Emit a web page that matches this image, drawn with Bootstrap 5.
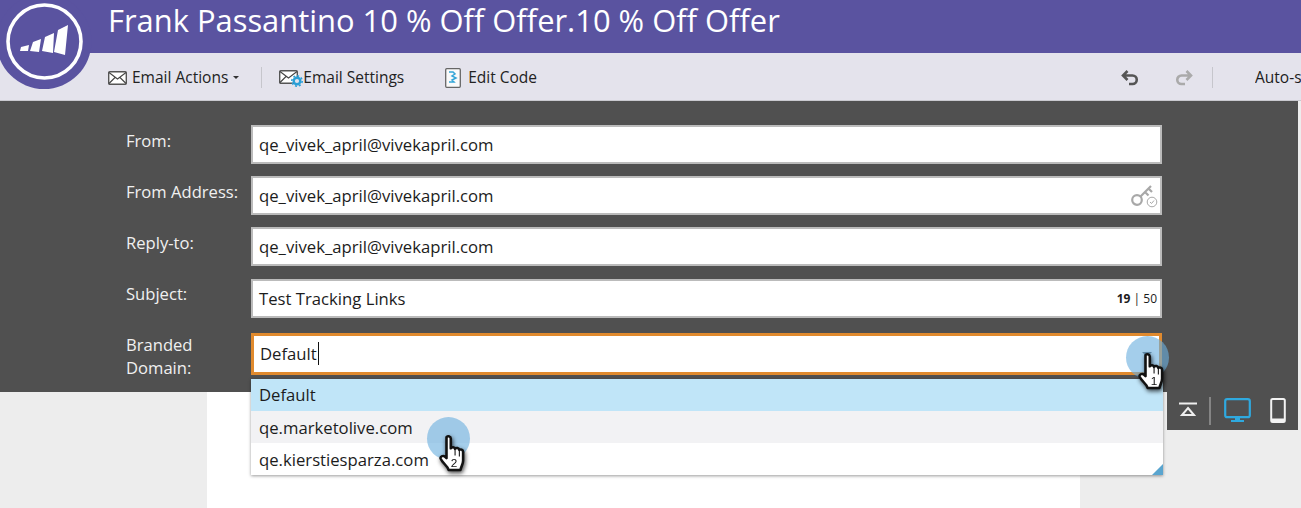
<!DOCTYPE html>
<html lang="en">
<head>
<meta charset="UTF-8">
<title>Email Editor</title>
<link href="https://cdn.jsdelivr.net/npm/bootstrap@5.3.0/dist/css/bootstrap.min.css" rel="stylesheet">
<style>
html, body { height: 508px; overflow: hidden; }
body { font-family: "Open Sans", sans-serif; background: #ededed; color: #1c1c1c; position: relative; width: 1301px; }
.title-bar { height: 53px; background: #5a53a0; color: #fff; font-size: 30.900px; line-height: 41px; padding-left: 108px; white-space: nowrap; }
.tool-bar { height: 48px; background: #e4e3ec; padding-left: 108px; padding-top: 2px; font-size: 15.500px; border-bottom: 1px solid #c9c9cf; white-space: nowrap; overflow: hidden; }
.tool-item { color: #222; }
.tool-sep { width: 1px; height: 21px; background: #c6c6cc; }
.caret-down { width: 0; height: 0; border-left: 3px solid transparent; border-right: 3px solid transparent; border-top: 3px solid #333; margin-left: 5px; }
.logo-badge { position: absolute; left: 0; top: 0; width: 92px; height: 90px; }
.work-left { width: 1167px; }
.form-panel { height: 291px; background: #505050; padding: 24px 5px 0 126px; }
.form-line { height: 39px; margin-bottom: 12.200px; }
.form-line-last { margin-top: 15.400px; height: 42px; }
.form-label-text { width: 125px; color: #f0f0f0; font-size: 16.600px; line-height: 23px; flex: none; margin-top: 3.500px; }
.form-line-last .form-label-text { margin-top: 0; }
.form-box { flex: 1; height: 39px; background: #fff; border: 2px solid #bbb; color: #1c1c1c; font-size: 16.700px; line-height: 36px; padding-left: 6px; position: relative; }
.form-box-active { border: 3px solid #e08a2e; height: 42px; padding-left: 6px; line-height: 36px; }
.text-caret { border-right: 1px solid #111; padding-right: 1px; }
.char-count { position: absolute; right: 3px; top: 0; font-size: 12px; line-height: 36px; }
.key-icon { position: absolute; right: 0; top: 3px; }
.select-arrow { position: absolute; right: 7px; top: 16px; width: 0; height: 0; border-left: 5px solid transparent; border-right: 5px solid transparent; border-top: 5px solid #555; }
.canvas-area { height: 116px; padding-left: 207px; padding-right: 87px; }
.canvas-page { height: 116px; background: #fff; }
.work-right { width: 131px; height: 329px; background: #505050; }
.side-sep { width: 2px; height: 28px; background: #858585; }
.drop-list { position: absolute; left: 251px; top: 379px; width: 912px; height: 96px; background: #fff; box-shadow: 0 1px 3px rgba(0,0,0,.4); font-size: 16.700px; }
.drop-row { height: 32px; line-height: 32px; padding-left: 8px; }
.drop-row + .drop-row { line-height: 34px; }
.drop-selected { background: #c0e5f8; }
.drop-hover { background: #f2f2f4; }
.drop-corner { position: absolute; right: 0; bottom: 0; width: 0; height: 0; border-left: 11px solid transparent; border-bottom: 11px solid #5aa5cf; }
.click-dot { position: absolute; width: 43px; height: 43px; border-radius: 50%; background: rgba(108,176,222,.62); }
.hand-cursor { position: absolute; width: 30px; height: 38px; filter: drop-shadow(1px 2px 2px rgba(0,0,0,.7)); }
.hand-num { font-family: "Liberation Sans", sans-serif; font-size: 11px; fill: #111; }
</style>
</head>
<body>
<div class="title-bar">Frank Passantino 10 % Off Offer.10 % Off Offer</div>

<div class="tool-bar d-flex align-items-center">
  <span class="tool-item d-flex align-items-center">
    <svg width="19" height="14" viewBox="0 0 19 14"><rect x=".7" y=".7" width="17.600" height="12.600" rx="1" fill="#fff" stroke="#555" stroke-width="1.400"/><path d="M1 1.500 9.500 8 18 1.500M1 12.500 7 6.500M18 12.500 12 6.500" fill="none" stroke="#444" stroke-width="1.100"/></svg>
    <span style="margin-left:5px">Email Actions</span>
    <span class="caret-down"></span>
  </span>
  <span class="tool-sep" style="margin-left:22px"></span>
  <span class="tool-item d-flex align-items-center" style="margin-left:17px">
    <svg width="24" height="18" viewBox="0 0 24 18"><rect x=".7" y="1.700" width="17.600" height="12.600" rx="1" fill="#fff" stroke="#555" stroke-width="1.400"/><path d="M1 2.500 9.500 9 18 2.500M1 13.500 7 7.500" fill="none" stroke="#444" stroke-width="1.100"/><circle cx="18" cy="12" r="3.300" fill="#e4e3ec" stroke="#2a9fd6" stroke-width="2.400"/><circle cx="18" cy="12" r="5.200" fill="none" stroke="#2a9fd6" stroke-width="1.500" stroke-dasharray="2 2"/></svg>
    Email Settings
  </span>
  <span class="tool-item d-flex align-items-center" style="margin-left:41px">
    <svg width="16" height="20" viewBox="0 0 16 20"><rect x=".7" y=".7" width="14.600" height="18.600" rx="1" fill="#fafafa" stroke="#666" stroke-width="1.300"/><path d="M4 4h4l2 2-3 2 4 2-4 2 2 2H4" fill="none" stroke="#35a6d8" stroke-width="1.500"/></svg>
    <span style="margin-left:7px">Edit Code</span>
  </span>
  <span class="d-flex align-items-center ms-auto">
    <svg width="18" height="16" viewBox="0 0 18 16"><path d="M6.500 1 2 5.500 6.500 10M2 5.500h9.500a4.200 4.200 0 0 1 0 8.500H8" fill="none" stroke="#555" stroke-width="2.600"/></svg>
    <svg width="18" height="16" viewBox="0 0 18 16" style="margin-left:36px"><path d="M11.500 1 16 5.500 11.500 10M16 5.500H6.500a4.200 4.200 0 0 0 0 8.500H10" fill="none" stroke="#aaa" stroke-width="2.600"/></svg>
    <span class="tool-sep" style="margin-left:19px"></span>
    <span style="margin-left:42px;width:46px;overflow:hidden">Auto-save</span>
  </span>
</div>

<div class="d-flex">
  <div class="work-left">
    <div class="form-panel">
      <div class="form-line d-flex"><div class="form-label-text">From:</div><div class="form-box">qe_vivek_april@vivekapril.com</div></div>
      <div class="form-line d-flex"><div class="form-label-text">From Address:</div><div class="form-box">qe_vivek_april@vivekapril.com
        <svg class="key-icon" width="30" height="30" viewBox="0 0 30 30"><circle cx="7" cy="19" r="4.800" fill="none" stroke="#a8a8a8" stroke-width="2.200"/><path d="M10.500 15.500 21 5M15 11l3.500 3.500M18.500 7.500 22 11" fill="none" stroke="#a8a8a8" stroke-width="2.200"/><circle cx="22" cy="21" r="4.800" fill="#fff" stroke="#a8a8a8"/><path d="M20 21l1.500 1.500 2.500-3" fill="none" stroke="#a8a8a8"/></svg>
      </div></div>
      <div class="form-line d-flex"><div class="form-label-text">Reply-to:</div><div class="form-box">qe_vivek_april@vivekapril.com</div></div>
      <div class="form-line d-flex"><div class="form-label-text">Subject:</div><div class="form-box">Test Tracking Links<span class="char-count"><b>19</b> | 50</span></div></div>
      <div class="form-line form-line-last d-flex"><div class="form-label-text">Branded Domain:</div><div class="form-box form-box-active"><span class="text-caret">Default</span><span class="select-arrow"></span></div></div>
    </div>
    <div class="canvas-area"><div class="canvas-page"></div></div>
  </div>
  <div class="work-right d-flex align-items-end">
    <svg width="20" height="16" viewBox="0 0 20 16" style="margin:0 0 12px 11px"><path d="M1 1.500h18" stroke="#eee" stroke-width="2"/><path d="M10 6l6 7H4z" fill="none" stroke="#eee" stroke-width="2"/></svg>
    <span class="side-sep" style="margin:0 0 5px 11px"></span>
    <svg width="27" height="25" viewBox="0 0 27 25" style="margin:0 0 7px 13px"><rect x="1.200" y="1.200" width="24.600" height="18" rx="2" fill="none" stroke="#2fa9df" stroke-width="2.200"/><path d="M11 20h5v2h4v2H7v-2h4z" fill="#2fa9df"/></svg>
    <svg width="16" height="25" viewBox="0 0 16 25" style="margin:0 0 7px 19px"><rect x="1.200" y="1" width="13.600" height="23" rx="1.500" fill="none" stroke="#f2f2f2" stroke-width="2"/><path d="M1 22h14" stroke="#f2f2f2" stroke-width="3"/></svg>
  </div>
</div>

<div class="logo-badge">
  <svg width="92" height="90" viewBox="0 0 92 90"><circle cx="44" cy="41.500" r="47.500" fill="#5a53a0"/><circle cx="44.500" cy="41.500" r="36.500" fill="#5a53a0" stroke="#fff" stroke-width="3.600"/><path d="M21 47l8-2-1 6h-8zM33 42l8-3-2 13-9-1zM45 37l9-4-1 20-11-2zM58 30l10-5-3 30-11-3z" fill="#fff"/></svg>
</div>

<div class="drop-list">
  <div class="drop-row drop-selected">Default</div>
  <div class="drop-row drop-hover">qe.marketolive.com</div>
  <div class="drop-row">qe.kierstiesparza.com</div>
  <span class="drop-corner"></span>
</div>

<span class="click-dot" style="left:1126px;top:336px"></span>
<svg class="hand-cursor" style="left:1138px;top:352px" viewBox="0 0 28 37" preserveAspectRatio="none"><path d="M7 3c1.500-1.500 4-1 4 1.500V14c1-1.500 3.500-1.500 4 .5 1-1.500 3.500-1 4 1 1-1 3.500-.5 3.500 2V26c0 3-1.500 5-2.500 9H9c-1-4-6-7-7.500-11-.5-2 2-3.500 4-2L7 23.500V5c0-1 0-1.500 0-2z" fill="#fff" stroke="#111" stroke-width="2.400" stroke-linejoin="round"/><path d="M15 15v6M19 16v6" stroke="#111"/><text class="hand-num" x="12" y="32">1</text></svg>
<span class="click-dot" style="left:427px;top:417px"></span>
<svg class="hand-cursor" style="left:439px;top:434px" viewBox="0 0 28 37" preserveAspectRatio="none"><path d="M7 3c1.500-1.500 4-1 4 1.500V14c1-1.500 3.500-1.500 4 .5 1-1.500 3.500-1 4 1 1-1 3.500-.5 3.500 2V26c0 3-1.500 5-2.500 9H9c-1-4-6-7-7.500-11-.5-2 2-3.500 4-2L7 23.500V5c0-1 0-1.500 0-2z" fill="#fff" stroke="#111" stroke-width="2.400" stroke-linejoin="round"/><path d="M15 15v6M19 16v6" stroke="#111"/><text class="hand-num" x="11" y="32">2</text></svg>

<script src="https://cdn.jsdelivr.net/npm/bootstrap@5.3.0/dist/js/bootstrap.bundle.min.js"></script>
</body>
</html>
